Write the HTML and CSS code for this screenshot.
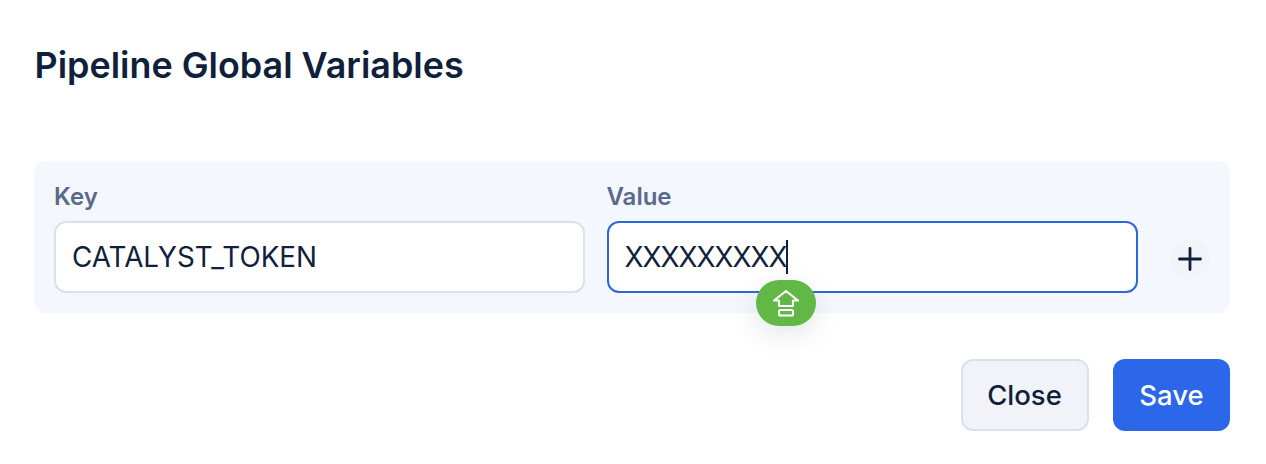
FILE: index.html
```html
<!DOCTYPE html>
<html lang="en">
<head>
<meta charset="utf-8">
<title>Pipeline Global Variables</title>
<link rel="stylesheet" href="styles.css">
</head>
<body>
<main class="modal">
  <h1 class="title">Pipeline Global Variables</h1>
  <section class="panel">
    <div class="field">
      <label class="label">Key</label>
      <div class="input">CATALYST_TOKEN</div>
    </div>
    <div class="field field-value">
      <label class="label">Value</label>
      <div class="input input-focus"><span class="typed">XXXXXXXXX</span><span class="caret"></span></div>
      <div class="badge">
        <svg width="28" height="28" viewBox="0 0 28 28" fill="none" stroke="#fff" stroke-width="2.1" stroke-linejoin="round" stroke-linecap="round">
          <path d="M14 2 L26 11.5 H21 V17 H7 V11.5 H2 Z"/>
          <rect x="7" y="21" width="14" height="5.5" rx="1.5"/>
        </svg>
      </div>
    </div>
    <button class="add" aria-label="Add">
      <svg width="24" height="24" viewBox="0 0 24 24" fill="none" stroke="#101f3c" stroke-width="2.8" stroke-linecap="round">
        <path d="M12 1.5 V22.5 M1.5 12 H22.5"/>
      </svg>
    </button>
  </section>
  <footer class="actions">
    <button class="btn btn-close">Close</button>
    <button class="btn btn-save">Save</button>
  </footer>
</main>
</body>
</html>
```
FILE: styles.css
```css
* { box-sizing: border-box; }
html, body { margin: 0; background: #fff; }
body { font-family: Inter, "Liberation Sans", sans-serif; color: #101f3c; width: 1266px; height: 464px; overflow: hidden; }
.modal { padding: 46px 36px 0 34px; }
.title { margin: 0 0 0 0.5px; font-size: 35.9px; line-height: 39px; font-weight: 600; color: #101f3c; }
.panel { margin-top: 76px; height: 152px; padding: 20px; background: #f5f7fe; border-radius: 12px; display: flex; gap: 22px; }
.field { width: 531px; display: flex; flex-direction: column; position: relative; }
.field-value { width: 532px; }
.label { font-size: 24px; line-height: 28px; font-weight: 600; color: #5a6a8a; margin: 2px 0 10px; }
.input { height: 72px; background: #fff; border: 2px solid #d9e0ee; border-radius: 12px; padding: 0 16px; display: flex; align-items: center; font-size: 27.8px; color: #101f3c; }
.input-focus { border-color: #2b67d8; }
.typed { letter-spacing: -0.95px; }
.caret { width: 2px; height: 34px; background: #101f3c; margin-left: -0.5px; }
.badge { position: absolute; left: 149px; top: 99px; width: 60px; height: 46px; border-radius: 23px; background: #62b846; display: flex; align-items: center; justify-content: center; box-shadow: 0 8px 26px rgba(40, 50, 90, 0.12); }
.add { align-self: flex-start; margin: 58px 0 0 10px; width: 40px; height: 40px; border: 0; border-radius: 50%; background: #f2f4fa; padding: 8px; display: flex; align-items: center; justify-content: center; }
.actions { display: flex; justify-content: flex-end; gap: 24px; margin-top: 46px; }
.btn { height: 72px; border-radius: 12px; font-family: inherit; font-size: 27.5px; font-weight: 500; padding: 0; }
.btn-close { width: 128px; background: #f1f3f9; border: 2px solid #d9e0ee; color: #101f3c; padding-right: 1px; }
.btn-save { width: 117px; background: #2b67e8; border: 0; color: #fff; }
```
